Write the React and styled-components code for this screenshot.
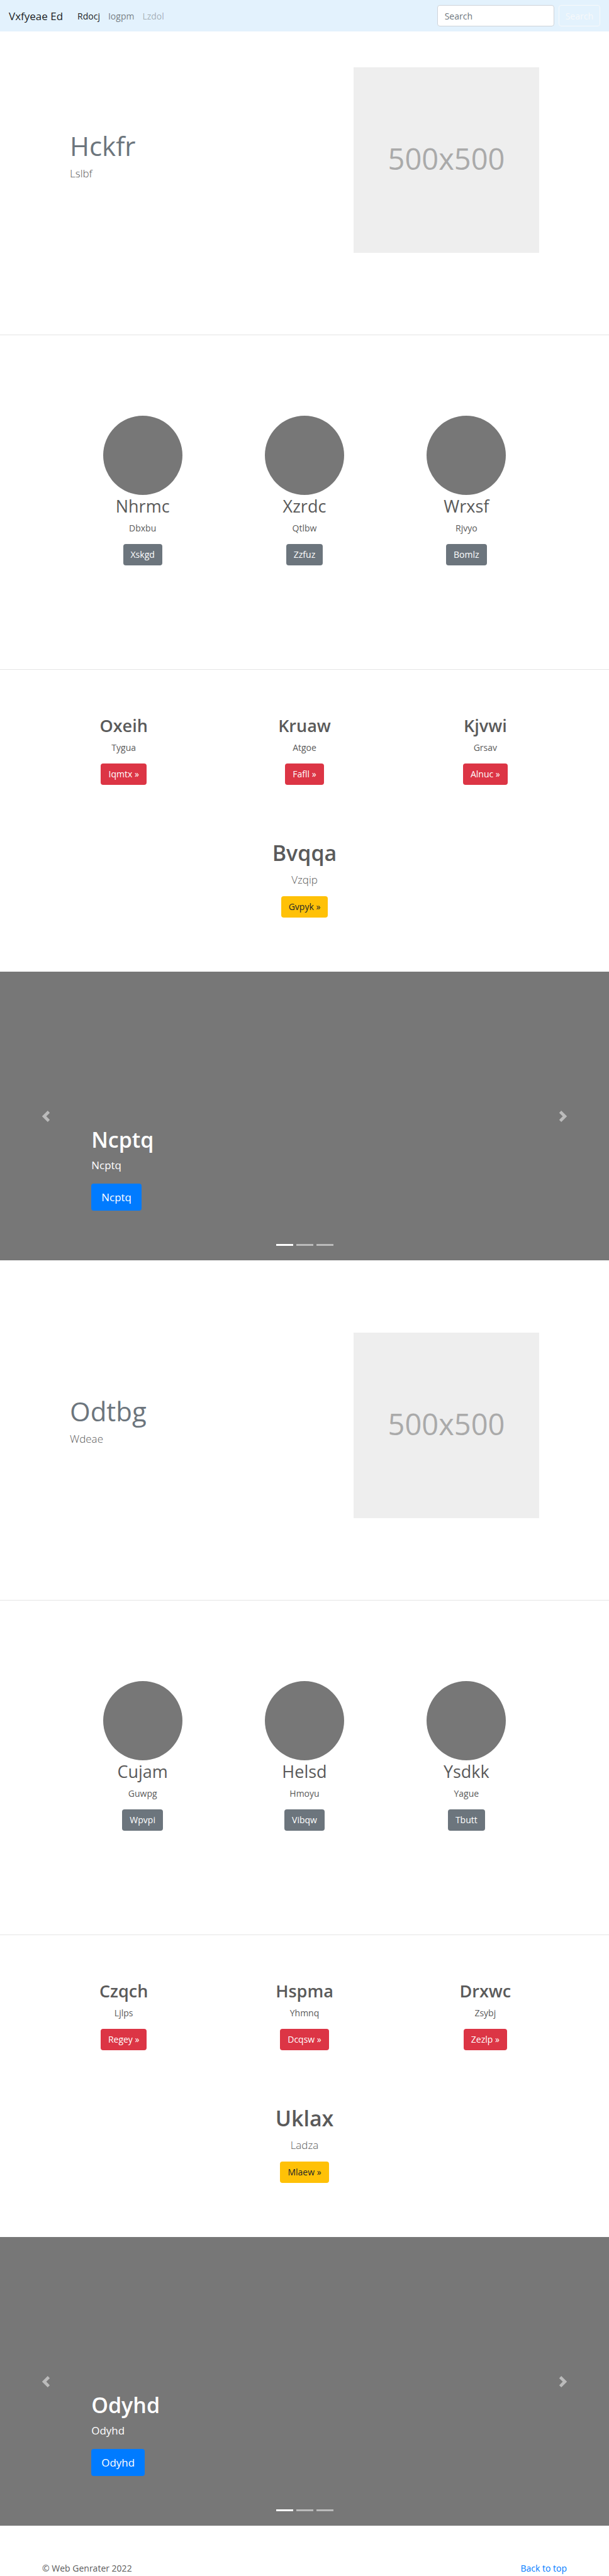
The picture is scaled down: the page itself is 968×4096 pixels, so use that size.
import React from "react";
import styled, { createGlobalStyle } from "styled-components";

const GlobalStyle = createGlobalStyle`
  *, *::before, *::after { box-sizing: border-box; }
  body {
    margin: 0;
    background: #fff;
    color: #5a5a5a;
    font-family: "Open Sans", "Noto Sans", sans-serif;
    font-size: 14px;
    line-height: 21px;
  }
  h1, h2, p, ul { margin: 0; padding: 0; }
  a { color: #007bff; text-decoration: none; }
`;

const Navbar = styled.nav`
  display: flex;
  align-items: center;
  height: 50px;
  padding: 0 14px;
  background: #e3f2fd;
`;

const Brand = styled.a`
  margin-right: 23px;
  color: rgba(0, 0, 0, 0.9);
  font-size: 17px;
  line-height: 27px;
`;

const NavList = styled.ul`
  display: flex;
  flex: 1;
  gap: 13px;
  list-style: none;
`;

const navColors = {
  active: "rgba(0, 0, 0, 0.9)",
  normal: "rgba(0, 0, 0, 0.5)",
  disabled: "rgba(0, 0, 0, 0.3)",
};

const NavLink = styled.a`
  color: ${({ $state }) => navColors[$state]};
`;

const SearchForm = styled.form`
  display: flex;
  gap: 7px;
`;

const SearchInput = styled.input`
  width: 186px;
  height: 34px;
  padding: 0 11px;
  border: 1px solid #ced4da;
  border-radius: 4px;
  background: #fff;
  color: #495057;
  font: inherit;
  &::placeholder { color: #6c757d; opacity: 1; }
`;

const SearchButton = styled.button`
  height: 34px;
  padding: 0 10px;
  border: 1px solid #f8f9fa;
  border-radius: 4px;
  background: transparent;
  color: #f8f9fa;
  font: inherit;
`;

const Hero = styled.section`
  display: flex;
  align-items: center;
  justify-content: space-between;
  padding: ${({ $first }) => ($first ? "57px" : "115px")} 111px 130px;
`;

const HeroTitle = styled.h1`
  margin-bottom: 2px;
  color: #6c757d;
  font-size: 42px;
  font-weight: 400;
  line-height: 56px;
`;

const Lead = styled.p`
  font-size: 17px;
  font-weight: 300;
  line-height: 27px;
`;

const HeroLead = styled(Lead)`
  margin-bottom: 16px;
`;

const Placeholder = styled.div`
  display: flex;
  align-items: center;
  justify-content: center;
  width: 295px;
  height: 295px;
  padding-bottom: 6px;
  background: #eee;
  color: #aaa;
  font-size: 47px;
  line-height: 64px;
`;

const Divider = styled.hr`
  height: 1px;
  margin: 0;
  border: 0;
  background: #e5e5e5;
`;

const Columns = styled.section`
  display: grid;
  grid-template-columns: repeat(3, 1fr);
  padding: ${({ $round }) => ($round ? "128px 98px 165px" : "71px 53px 88px")};
`;

const Cell = styled.div`
  display: flex;
  flex-direction: column;
  align-items: center;
`;

const Avatar = styled.div`
  width: 126px;
  height: 126px;
  border-radius: 50%;
  background: #777;
`;

const CellTitle = styled.h2`
  margin-bottom: 6px;
  font-size: 27px;
  font-weight: ${({ $strong }) => ($strong ? 600 : 400)};
  line-height: 36px;
`;

const CellText = styled.p`
  margin-bottom: 15px;
`;

const tones = {
  grey: ["#6c757d", "#fff"],
  red: ["#dc3545", "#fff"],
  yellow: ["#ffc107", "#212529"],
  blue: ["#007bff", "#fff"],
};

const Button = styled.a`
  display: inline-block;
  padding: 6px 12px 7px;
  border-radius: 4px;
  background: ${({ $tone }) => tones[$tone][0]};
  color: ${({ $tone }) => tones[$tone][1]};
`;

const LargeButton = styled(Button)`
  padding: 8px 16px;
  font-size: 17px;
  line-height: 27px;
`;

const Callout = styled.section`
  display: flex;
  flex-direction: column;
  align-items: center;
  padding-bottom: 86px;
`;

const CalloutTitle = styled.h2`
  margin-bottom: 9px;
  font-size: 34px;
  font-weight: 600;
  line-height: 40px;
`;

const CalloutLead = styled(Lead)`
  margin-bottom: 13px;
`;

const Carousel = styled.section`
  position: relative;
  display: grid;
  grid-template-columns: 15% 1fr 15%;
  height: 459px;
  background: #777;
  color: #fff;
`;

const Control = styled.button`
  display: flex;
  align-items: center;
  justify-content: center;
  padding: 0;
  border: 0;
  background: none;
  color: #fff;
  opacity: 0.5;
`;

const Caption = styled.div`
  display: flex;
  flex-direction: column;
  align-items: flex-start;
  justify-content: flex-end;
  padding-bottom: 79px;
`;

const CaptionTitle = styled.h2`
  margin-bottom: 7px;
  font-size: 34px;
  font-weight: 600;
  line-height: 40px;
`;

const CaptionText = styled.p`
  margin-bottom: 16px;
  font-size: 17px;
  line-height: 27px;
`;

const Indicators = styled.div`
  position: absolute;
  right: 0;
  bottom: 23px;
  left: 0;
  display: flex;
  justify-content: center;
  gap: 5px;
`;

const Indicator = styled.button`
  width: 27px;
  height: 3px;
  padding: 0;
  border: 0;
  background: #fff;
  opacity: ${({ $active }) => ($active ? 1 : 0.5)};
`;

const Footer = styled.footer`
  display: flex;
  justify-content: space-between;
  padding: 57px 67px 2px;
`;

const blocks = [
  {
    hero: ["Hckfr", "Lslbf"],
    round: [
      ["Nhrmc", "Dbxbu", "Xskgd"],
      ["Xzrdc", "Qtlbw", "Zzfuz"],
      ["Wrxsf", "Rjvyo", "Bomlz"],
    ],
    plain: [
      ["Oxeih", "Tygua", "Iqmtx"],
      ["Kruaw", "Atgoe", "Fafll"],
      ["Kjvwi", "Grsav", "Alnuc"],
    ],
    callout: ["Bvqqa", "Vzqip", "Gvpyk"],
    slide: "Ncptq",
  },
  {
    hero: ["Odtbg", "Wdeae"],
    round: [
      ["Cujam", "Guwpg", "Wpvpi"],
      ["Helsd", "Hmoyu", "Vibqw"],
      ["Ysdkk", "Yague", "Tbutt"],
    ],
    plain: [
      ["Czqch", "Ljlps", "Regey"],
      ["Hspma", "Yhmnq", "Dcqsw"],
      ["Drxwc", "Zsybj", "Zezlp"],
    ],
    callout: ["Uklax", "Ladza", "Mlaew"],
    slide: "Odyhd",
  },
];

function Chevron({ d }) {
  return (
    <svg width="18" height="18" viewBox="0 0 8 8" fill="currentColor" aria-hidden="true">
      <path d={d} />
    </svg>
  );
}

function Block({ data, first }) {
  const { hero, round, plain, callout, slide } = data;
  return (
    <>
      <Hero $first={first}>
        <div>
          <HeroTitle>{hero[0]}</HeroTitle>
          <HeroLead>{hero[1]}</HeroLead>
        </div>
        <Placeholder>500x500</Placeholder>
      </Hero>
      <Divider />
      <Columns $round>
        {round.map(([title, text, action]) => (
          <Cell key={title}>
            <Avatar />
            <CellTitle>{title}</CellTitle>
            <CellText>{text}</CellText>
            <Button href="#" $tone="grey">{action}</Button>
          </Cell>
        ))}
      </Columns>
      <Divider />
      <Columns>
        {plain.map(([title, text, action]) => (
          <Cell key={title}>
            <CellTitle $strong>{title}</CellTitle>
            <CellText>{text}</CellText>
            <Button href="#" $tone="red">{action} »</Button>
          </Cell>
        ))}
      </Columns>
      <Callout>
        <CalloutTitle>{callout[0]}</CalloutTitle>
        <CalloutLead>{callout[1]}</CalloutLead>
        <Button href="#" $tone="yellow">{callout[2]} »</Button>
      </Callout>
      <Carousel>
        <Control type="button" aria-label="Previous">
          <Chevron d="M5.25 0l-4 4 4 4 1.5-1.5-2.5-2.5 2.5-2.5-1.5-1.5z" />
        </Control>
        <Caption>
          <CaptionTitle>{slide}</CaptionTitle>
          <CaptionText>{slide}</CaptionText>
          <LargeButton href="#" $tone="blue">{slide}</LargeButton>
        </Caption>
        <Control type="button" aria-label="Next">
          <Chevron d="M2.75 0l-1.5 1.5 2.5 2.5-2.5 2.5 1.5 1.5 4-4-4-4z" />
        </Control>
        <Indicators>
          {[1, 2, 3].map((n) => (
            <Indicator key={n} type="button" aria-label={`Slide ${n}`} $active={n === 1} />
          ))}
        </Indicators>
      </Carousel>
    </>
  );
}

export default function App() {
  return (
    <>
      <GlobalStyle />
      <Navbar>
        <Brand href="#">Vxfyeae Ed</Brand>
        <NavList>
          <li><NavLink href="#" $state="active">Rdocj</NavLink></li>
          <li><NavLink href="#" $state="normal">Iogpm</NavLink></li>
          <li><NavLink href="#" $state="disabled" aria-disabled="true">Lzdol</NavLink></li>
        </NavList>
        <SearchForm onSubmit={(e) => e.preventDefault()}>
          <SearchInput type="text" placeholder="Search" aria-label="Search" />
          <SearchButton type="submit">Search</SearchButton>
        </SearchForm>
      </Navbar>
      <main>
        {blocks.map((data, i) => (
          <Block key={data.slide} data={data} first={i === 0} />
        ))}
      </main>
      <Footer>
        <p>© Web Genrater 2022</p>
        <a href="#">Back to top</a>
      </Footer>
    </>
  );
}
